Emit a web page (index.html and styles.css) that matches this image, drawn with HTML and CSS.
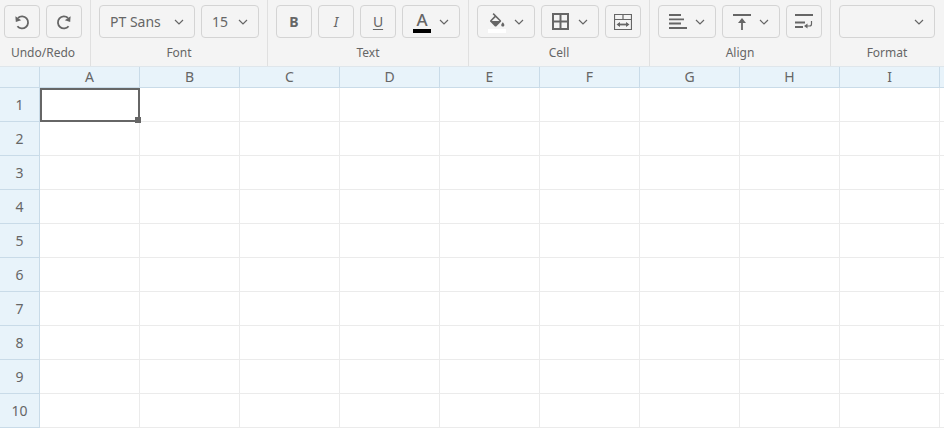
FILE: index.html
```html
<!DOCTYPE html>
<html lang="en">
<head>
  <meta charset="UTF-8">
  <meta name="viewport" content="width=device-width, initial-scale=1.0">
  <title>Spreadsheet</title>
  <link rel="stylesheet" href="styles.css">
</head>
<body>
  <div class="toolbar">
    <div class="group first">
      <div class="controls">
        <button class="btn icon-btn"><svg width="18" height="18" viewBox="0 0 18 18"><path class="line" d="M5 5 A6 6 0 1 1 4.400 13.200"/><path class="fill" d="M2.400 3.200 L2.800 9 L8.200 7.200 Z"/></svg></button>
        <button class="btn icon-btn"><svg width="18" height="18" viewBox="0 0 18 18"><path class="line" d="M13 5 A6 6 0 1 0 13.600 13.200"/><path class="fill" d="M15.600 3.200 L15.200 9 L9.800 7.200 Z"/></svg></button>
      </div>
      <div class="group-label">Undo/Redo</div>
    </div>
    <div class="group">
      <div class="controls">
        <button class="btn select font-select"><span>PT Sans</span><svg class="chev" width="10" height="6" viewBox="0 0 10 6"><path d="M1 1 L5 5 L9 1"/></svg></button>
        <button class="btn select size-select"><span>15</span><svg class="chev" width="10" height="6" viewBox="0 0 10 6"><path d="M1 1 L5 5 L9 1"/></svg></button>
      </div>
      <div class="group-label">Font</div>
    </div>
    <div class="group">
      <div class="controls">
        <button class="btn icon-btn bold">B</button>
        <button class="btn icon-btn italic">I</button>
        <button class="btn icon-btn under">U</button>
        <button class="btn drop">
          <span class="color-pick"><span class="color-a">A</span><i class="color-bar black"></i></span>
          <svg class="chev" width="10" height="6" viewBox="0 0 10 6"><path d="M1 1 L5 5 L9 1"/></svg>
        </button>
      </div>
      <div class="group-label">Text</div>
    </div>
    <div class="group">
      <div class="controls">
        <button class="btn drop">
          <span class="color-pick">
            <svg class="fill-icon" width="18" height="15" viewBox="0.5 0 22.5 18.75"><path class="fill" d="M16.560 8.940L7.620 0 6.210 1.410l2.380 2.380-5.150 5.150c-.59.59-.59 1.540 0 2.120l5.500 5.500c.29.29.68.44 1.060.44s.77-.15 1.060-.44l5.500-5.500c.59-.58.59-1.530 0-2.120zM5.210 10L10 5.210 14.790 10H5.210zM19 11.500s-2 2.170-2 3.500c0 1.100.9 2 2 2s2-.9 2-2c0-1.330-2-3.500-2-3.500z"/></svg>
            <i class="color-bar white"></i>
          </span>
          <svg class="chev" width="10" height="6" viewBox="0 0 10 6"><path d="M1 1 L5 5 L9 1"/></svg>
        </button>
        <button class="btn drop">
          <svg width="18" height="17" viewBox="0 0 18 17"><path class="thick" d="M1 1 H16 V16 H1 Z M8.500 1 V16 M1 8.500 H16"/></svg>
          <svg class="chev" width="10" height="6" viewBox="0 0 10 6"><path d="M1 1 L5 5 L9 1"/></svg>
        </button>
        <button class="btn icon-btn"><svg width="18" height="16" viewBox="0 0 18 16"><path class="thin" d="M.5 .5 H17.500 V15.500 H.5 Z M.5 5.500 H17.500 M9 .5 V5.500"/><path class="thin2" d="M4 10.500 H14"/><path class="fill" d="M2.500 10.500 L6 8 V13 Z M15.500 10.500 L12 8 V13 Z"/></svg></button>
      </div>
      <div class="group-label">Cell</div>
    </div>
    <div class="group">
      <div class="controls">
        <button class="btn drop">
          <svg width="18" height="15" viewBox="0 0 18 15"><path class="thin2" d="M0 1 H12 M0 5.300 H15 M0 9.500 H12 M0 14 H18"/></svg>
          <svg class="chev" width="10" height="6" viewBox="0 0 10 6"><path d="M1 1 L5 5 L9 1"/></svg>
        </button>
        <button class="btn drop">
          <svg width="18" height="16" viewBox="0 0 18 16"><path class="thin2" d="M0 1 H18 M9 8 V16"/><path class="fill" d="M9 4 L13 9 H5 Z"/></svg>
          <svg class="chev" width="10" height="6" viewBox="0 0 10 6"><path d="M1 1 L5 5 L9 1"/></svg>
        </button>
        <button class="btn icon-btn"><svg width="18" height="15" viewBox="0 0 18 15"><path class="thin2" d="M0 1 H18 M0 8.500 H10 M0 13 H8"/><path class="thin" d="M16.500 7 V10 Q16.500 12 14.500 12 H11"/><path class="fill" d="M9 12 L12.500 9.500 V14.500 Z"/></svg></button>
      </div>
      <div class="group-label">Align</div>
    </div>
    <div class="group">
      <div class="controls">
        <button class="btn select font-select"><span></span><svg class="chev" width="10" height="6" viewBox="0 0 10 6"><path d="M1 1 L5 5 L9 1"/></svg></button>
      </div>
      <div class="group-label">Format</div>
    </div>
  </div>

  <div class="sheet">
    <div class="row head-row">
      <div class="corner"></div>
      <div class="col-head">A</div><div class="col-head">B</div><div class="col-head">C</div><div class="col-head">D</div><div class="col-head">E</div><div class="col-head">F</div><div class="col-head">G</div><div class="col-head">H</div><div class="col-head">I</div><div class="col-head"></div>
    </div>
    <div class="row"><div class="row-head">1</div><div class="cell selected"><i class="handle"></i></div><div class="cell"></div><div class="cell"></div><div class="cell"></div><div class="cell"></div><div class="cell"></div><div class="cell"></div><div class="cell"></div><div class="cell"></div><div class="cell"></div></div>
    <div class="row"><div class="row-head">2</div><div class="cell"></div><div class="cell"></div><div class="cell"></div><div class="cell"></div><div class="cell"></div><div class="cell"></div><div class="cell"></div><div class="cell"></div><div class="cell"></div><div class="cell"></div></div>
    <div class="row"><div class="row-head">3</div><div class="cell"></div><div class="cell"></div><div class="cell"></div><div class="cell"></div><div class="cell"></div><div class="cell"></div><div class="cell"></div><div class="cell"></div><div class="cell"></div><div class="cell"></div></div>
    <div class="row"><div class="row-head">4</div><div class="cell"></div><div class="cell"></div><div class="cell"></div><div class="cell"></div><div class="cell"></div><div class="cell"></div><div class="cell"></div><div class="cell"></div><div class="cell"></div><div class="cell"></div></div>
    <div class="row"><div class="row-head">5</div><div class="cell"></div><div class="cell"></div><div class="cell"></div><div class="cell"></div><div class="cell"></div><div class="cell"></div><div class="cell"></div><div class="cell"></div><div class="cell"></div><div class="cell"></div></div>
    <div class="row"><div class="row-head">6</div><div class="cell"></div><div class="cell"></div><div class="cell"></div><div class="cell"></div><div class="cell"></div><div class="cell"></div><div class="cell"></div><div class="cell"></div><div class="cell"></div><div class="cell"></div></div>
    <div class="row"><div class="row-head">7</div><div class="cell"></div><div class="cell"></div><div class="cell"></div><div class="cell"></div><div class="cell"></div><div class="cell"></div><div class="cell"></div><div class="cell"></div><div class="cell"></div><div class="cell"></div></div>
    <div class="row"><div class="row-head">8</div><div class="cell"></div><div class="cell"></div><div class="cell"></div><div class="cell"></div><div class="cell"></div><div class="cell"></div><div class="cell"></div><div class="cell"></div><div class="cell"></div><div class="cell"></div></div>
    <div class="row"><div class="row-head">9</div><div class="cell"></div><div class="cell"></div><div class="cell"></div><div class="cell"></div><div class="cell"></div><div class="cell"></div><div class="cell"></div><div class="cell"></div><div class="cell"></div><div class="cell"></div></div>
    <div class="row"><div class="row-head">10</div><div class="cell"></div><div class="cell"></div><div class="cell"></div><div class="cell"></div><div class="cell"></div><div class="cell"></div><div class="cell"></div><div class="cell"></div><div class="cell"></div><div class="cell"></div></div>
  </div>
</body>
</html>
```

FILE: styles.css
```css
* {
  box-sizing: border-box;
}

html, body {
  height: 100%;
  overflow: hidden;
}

body {
  margin: 0;
  font-family: "Noto Sans", sans-serif;
  font-size: 13px;
  color: #666;
  background-color: white;
}

.toolbar {
  display: flex;
  height: 67px;
  background-color: #f4f4f4;
  border-bottom: 1px solid #dfe6eb;
}

.group {
  display: flex;
  flex-direction: column;
  align-items: center;
  padding: 5px 8px 0 8px;
  border-right: 1px solid #e0e0e0;
}

.group.first {
  padding-left: 4px;
}

.group:last-child {
  border-right: none;
}

.controls {
  display: flex;
  gap: 6px;
}

.group-label {
  margin-top: 5px;
  font-size: 12px;
  line-height: 20px;
  color: #666;
}

.btn {
  display: flex;
  align-items: center;
  justify-content: center;
  height: 33px;
  padding: 0;
  background-color: #f4f4f4;
  border: 1px solid #d4d4d4;
  border-radius: 4px;
  font-family: inherit;
  font-size: 14px;
  color: #666;
}

.icon-btn {
  width: 36px;
}

.select {
  justify-content: space-between;
  padding: 0 10px;
}

.font-select {
  width: 96px;
}

.size-select {
  width: 58px;
}

.drop {
  width: 58px;
  gap: 8px;
}

.bold {
  font-weight: bold;
}

.italic {
  font-style: italic;
}

.under {
  text-decoration: underline;
  text-underline-offset: 2px;
}

.chev {
  fill: none;
  stroke: #666;
  stroke-width: 1.2;
}

.line {
  fill: none;
  stroke: #666;
  stroke-width: 1.8;
}

.fill {
  fill: #666;
}

.thick {
  fill: none;
  stroke: #666;
  stroke-width: 2;
}

.thin {
  fill: none;
  stroke: #666;
  stroke-width: 1.2;
}

.thin2 {
  fill: none;
  stroke: #666;
  stroke-width: 1.8;
}

.color-pick {
  display: flex;
  flex-direction: column;
  align-items: center;
  align-self: flex-end;
  margin-bottom: 4px;
}

.color-a {
  font-size: 17px;
  font-weight: 500;
  line-height: 16px;
  margin-bottom: 1px;
}

.fill-icon {
  display: block;
  margin-bottom: 1px;
}

.color-bar {
  display: block;
  width: 18px;
  height: 4px;
}

.color-bar.black {
  background-color: black;
}

.color-bar.white {
  background-color: white;
}

.row {
  display: flex;
  height: 34px;
}

.head-row {
  height: 21px;
}

.corner, .row-head {
  flex: none;
  width: 40px;
  background-color: #e8f3fa;
  border-right: 1px solid #c9dbe8;
  border-bottom: 1px solid #c9dbe8;
}

.row-head {
  display: flex;
  align-items: center;
  justify-content: center;
  font-size: 14px;
}

.col-head {
  flex: none;
  width: 100px;
  text-align: center;
  font-size: 14px;
  line-height: 20px;
  background-color: #e8f3fa;
  border-right: 1px solid #c9dbe8;
  border-bottom: 1px solid #c9dbe8;
}

.cell {
  flex: none;
  width: 100px;
  background-color: white;
  border-right: 1px solid #ebebeb;
  border-bottom: 1px solid #ebebeb;
}

/* column past I is cut by the window edge */
.col-head:last-child, .cell:last-child {
  flex: 1;
  width: auto;
  border-right: none;
}

.cell.selected {
  position: relative;
  border: 2px solid #666;
}

.handle {
  position: absolute;
  right: -3px;
  bottom: -3px;
  width: 6px;
  height: 6px;
  background-color: #666;
}
```
